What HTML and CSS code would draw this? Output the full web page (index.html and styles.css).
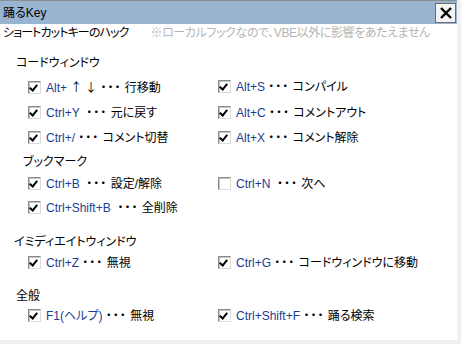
FILE: index.html
```html
<!DOCTYPE html>
<html lang="ja">
<head>
    <meta charset="UTF-8">
    <title>踊るKey</title>
    <link rel="stylesheet" href="styles.css">
</head>
<body>
    <div class="window">
        <div class="titlebar">
            <span class="title">踊るKey</span>
            <button class="close" type="button" aria-label="閉じる">
                <svg width="14" height="14" viewBox="0 0 14 14"><path d="M2 2 L12 12 M12 2 L2 12" stroke="#000" stroke-width="2.4" fill="none"/></svg>
            </button>
        </div>
        <div class="content">
            <div class="lead"><span class="lead-text">ショートカットキーのハック</span><span class="note">※ローカルフックなので、VBE以外に影響をあたえません</span></div>

            <div class="heading">コードウィンドウ</div>
            <div class="keys keys-code">
                <label class="key"><span class="box on"></span><span class="combo">Alt+</span> <span class="arrow">↑ ↓</span> <span class="dots">・・・</span> 行移動</label>
                <label class="key"><span class="box on"></span><span class="combo">Alt+S</span> <span class="dots">・・・</span> コンパイル</label>
                <label class="key"><span class="box on"></span><span class="combo">Ctrl+Y</span>&nbsp; <span class="dots">・・・</span> 元に戻す</label>
                <label class="key"><span class="box on"></span><span class="combo">Alt+C</span> <span class="dots">・・・</span> コメントアウト</label>
                <label class="key"><span class="box on"></span><span class="combo">Ctrl+/</span> <span class="dots">・・・</span> コメント切替</label>
                <label class="key"><span class="box on"></span><span class="combo">Alt+X</span> <span class="dots">・・・</span> コメント解除</label>
            </div>

            <div class="heading heading-sub">ブックマーク</div>
            <div class="keys keys-mark">
                <label class="key"><span class="box on"></span><span class="combo">Ctrl+B</span>&nbsp; <span class="dots">・・・</span> 設定/解除</label>
                <label class="key"><span class="box"></span><span class="combo">Ctrl+N</span>&nbsp; <span class="dots">・・・</span> 次へ</label>
                <label class="key"><span class="box on"></span><span class="combo">Ctrl+Shift+B</span>&nbsp; <span class="dots">・・・</span> 全削除</label>
            </div>

            <div class="heading heading-imm">イミディエイトウィンドウ</div>
            <div class="keys keys-imm">
                <label class="key"><span class="box on"></span><span class="combo">Ctrl+Z</span> <span class="dots">・・・</span> 無視</label>
                <label class="key"><span class="box on"></span><span class="combo">Ctrl+G</span> <span class="dots">・・・</span> コードウィンドウに移動</label>
            </div>

            <div class="heading heading-all">全般</div>
            <div class="keys keys-all">
                <label class="key"><span class="box on"></span><span class="combo">F1(ヘルプ)</span> <span class="dots">・・・</span> 無視</label>
                <label class="key"><span class="box on"></span><span class="combo">Ctrl+Shift+F</span> <span class="dots">・・・</span> 踊る検索</label>
            </div>
        </div>
    </div>
</body>
</html>
```

FILE: styles.css
```css
body {
    margin: 0;
    background-color: #f0f0f0;
    font-family: "Liberation Sans", "Noto Sans CJK JP", sans-serif;
    font-size: 12px;
    font-feature-settings: "palt";
    color: #000;
}
.window {
    width: 457px;
    height: 340px;
    border-top: 1px solid #8d8d8d;
    box-sizing: border-box;
    display: flex;
    flex-direction: column;
}
.titlebar {
    height: 23px;
    background-color: #99b4d1;
    display: flex;
    align-items: center;
    justify-content: space-between;
    padding-left: 3px;
}
.title {
    line-height: 16px;
}
.close {
    width: 21px;
    height: 20px;
    margin-right: 1px;
    padding: 0;
    border: 1px solid #6d6d6d;
    background-color: #f4f4f4;
    display: flex;
    align-items: center;
    justify-content: center;
}
.content {
    flex: 1;
    background-color: #fff;
    padding-left: 3px;
}
.lead {
    height: 18px;
    line-height: 18px;
    white-space: nowrap;
}
.lead-text {
    letter-spacing: -0.9px;
}
.note {
    color: #b4b4b4;
    margin-left: 22px;
    letter-spacing: -0.4px;
}
.heading {
    height: 18px;
    line-height: 18px;
    margin-top: 12px;
    padding-left: 13px;
}
.heading-sub {
    margin-top: 6px;
    padding-left: 20px;
}
.heading-imm {
    margin-top: 16px;
    padding-left: 11px;
}
.heading-all {
    margin-top: 15px;
}
.keys {
    display: grid;
    grid-template-columns: 190px 1fr;
    padding-left: 25px;
    row-gap: 7.5px;
    margin-top: 6px;
}
.keys-mark {
    margin-top: 4px;
    row-gap: 6px;
}
.keys-imm {
    margin-top: 3px;
}
.keys-all {
    margin-top: 2px;
}
.key {
    display: block;
    height: 18px;
    line-height: 18px;
    white-space: pre;
}
.combo {
    color: #1b3d92;
}
.arrow {
    font-family: "Noto Sans CJK JP", sans-serif;
    font-feature-settings: normal;
    font-size: 12px;
}
.dots {
    letter-spacing: 1px;
}
.box {
    display: inline-block;
    vertical-align: -2px;
    width: 13px;
    height: 13px;
    box-sizing: border-box;
    border-style: solid;
    border-width: 1px;
    border-color: #8a8a8a #dcdcdc #dcdcdc #8a8a8a;
    box-shadow: inset 1px 1px 0 #c4c4c4;
    background-color: #fff;
    margin-right: 5px;
    position: relative;
}
.box.on::after {
    content: "";
    position: absolute;
    left: 2px;
    top: 1px;
    width: 3px;
    height: 6px;
    border-right: 2px solid #000;
    border-bottom: 2px solid #000;
    transform: rotate(40deg);
}
```
